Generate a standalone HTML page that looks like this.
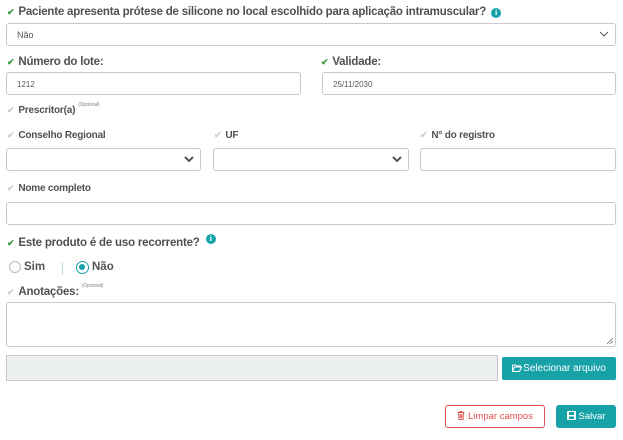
<!DOCTYPE html>
<html><head><meta charset="utf-8"><style>
*{box-sizing:border-box;margin:0;padding:0}
body{width:623px;height:440px;background:#fff;font-family:"Liberation Sans",sans-serif;position:relative;overflow:hidden;color:#555}
.a{position:absolute}
.lbl{position:absolute;font-weight:bold;font-size:11px;color:#505050;white-space:nowrap;letter-spacing:-0.2px}
.lbl.big{font-size:11.5px}
.ck{display:inline-block;font-size:9px;margin-right:4px;color:#3a9a3a;font-weight:bold}
.ck.g{color:#ccc}
.opt{font-size:5px;color:#888;font-weight:normal;vertical-align:top;position:relative;top:-3px;margin-left:3px}
.box{position:absolute;border:1px solid #c8c8c8;border-radius:3px;background:#fff;font-size:9px;color:#555}
.box span{position:absolute;left:10px;top:6px}
.chev{position:absolute;right:6px;top:6px;width:10px;height:8px}
.info{display:inline-block;width:10px;height:10px;border-radius:50%;background:#17a2a8;color:#fff;font-size:8px;text-align:center;line-height:10px;font-weight:bold;font-family:"Liberation Serif",serif;vertical-align:top}
</style></head><body>
<div class="lbl big" style="left:7px;top:6px"><span class="ck">✔</span>Paciente apresenta prótese de silicone no local escolhido para aplicação intramuscular? <span class="info" style="margin-left:2px;margin-top:2px">i</span></div>
<div class="box" style="left:6px;top:23px;width:610px;height:23px"><span style="top:6px">Não</span><svg class="chev" viewBox="0 0 10 8"><path d="M1 2 L5 6 L9 2" stroke="#555" fill="none" stroke-width="1"/></svg></div>

<div class="lbl big" style="left:7px;top:56px"><span class="ck">✔</span>Número do lote:</div>
<div class="lbl big" style="left:321px;top:56px"><span class="ck">✔</span>Validade:</div>
<div class="box" style="left:6px;top:72px;width:295px;height:23px"><span style="font-size:8px;top:7px">1212</span></div>
<div class="box" style="left:322px;top:72px;width:294px;height:23px"><span style="font-size:8px;top:7px">25/11/2030</span></div>

<div class="lbl" style="left:7px;top:105px;font-size:10px"><span class="ck g">✔</span>Prescritor(a)<span class="opt">(Opcional)</span></div>
<div class="lbl" style="left:7px;top:130px;font-size:10px"><span class="ck g">✔</span>Conselho Regional</div>
<div class="lbl" style="left:214px;top:130px;font-size:10px"><span class="ck g">✔</span>UF</div>
<div class="lbl" style="left:420px;top:130px;font-size:10px"><span class="ck g">✔</span>N° do registro</div>
<div class="box" style="left:6px;top:148px;width:195px;height:23px"><svg class="chev" viewBox="0 0 10 8"><path d="M1 2 L5 6 L9 2" stroke="#555" fill="none" stroke-width="2"/></svg></div>
<div class="box" style="left:213px;top:148px;width:196px;height:23px"><svg class="chev" viewBox="0 0 10 8"><path d="M1 2 L5 6 L9 2" stroke="#555" fill="none" stroke-width="2"/></svg></div>
<div class="box" style="left:420px;top:148px;width:196px;height:23px"></div>

<div class="lbl" style="left:7px;top:183px;font-size:10px"><span class="ck g">✔</span>Nome completo</div>
<div class="box" style="left:6px;top:202px;width:610px;height:23px"></div>

<div class="lbl big" style="left:7px;top:237px"><span class="ck">✔</span>Este produto é de uso recorrente? <span class="info" style="margin-left:3px;margin-top:-3px">i</span></div>
<div class="a" style="left:9px;top:261px;width:12px;height:12px;border:1px solid #bbb;border-radius:50%"></div>
<div class="a" style="left:24px;top:261px;font-weight:bold;font-size:11.5px;color:#555">Sim</div>
<div class="a" style="left:62px;top:262px;width:1px;height:13px;background:#aee0e0"></div>
<div class="a" style="left:76px;top:261px;width:13px;height:13px;border:1.5px solid #17a2a8;border-radius:50%"><div style="margin:2px;width:6px;height:6px;border-radius:50%;background:#17a2a8"></div></div>
<div class="a" style="left:92px;top:261px;font-weight:bold;font-size:11.5px;color:#555">Não</div>

<div class="lbl big" style="left:7px;top:286px"><span class="ck g">✔</span>Anotações:<span class="opt">(Opcional)</span></div>
<div class="box" style="left:6px;top:302px;width:610px;height:45px"><svg class="a" style="right:2px;bottom:2px" width="6" height="6"><path d="M0 6 L6 0 M3 6 L6 3" stroke="#777" stroke-width="0.8"/></svg></div>

<div class="a" style="left:6px;top:355px;width:492px;height:26px;background:#eceff0;border:1px solid #c8c8c8"></div>
<div class="a" style="left:502px;top:357px;width:114px;height:23px;background:#17a2a8;border-radius:2px;color:#fff;font-size:10px;line-height:23px;text-align:center"><svg width="10" height="8" style="vertical-align:-1px;margin-right:1px"><path d="M0.5 1 H4 L5 2 H8.5 V3 M0.5 1 V7.5 H7.5 L9.5 3 H2.5 L0.5 7.5" stroke="#fff" fill="none" stroke-width="1"/></svg>Selecionar arquivo</div>

<div class="a" style="left:445px;top:405px;width:100px;height:23px;border:1px solid #e05050;border-radius:3px;color:#e05050;font-size:9.5px;line-height:21px;text-align:center"><svg width="8" height="9" style="vertical-align:-1px;margin-right:3px"><path d="M0.5 1.5 H7.5 M3 1.5 V0.5 H5 V1.5 M1.5 1.5 L2 8.5 H6 L6.5 1.5 M3.3 3 V7 M4.7 3 V7" stroke="#e05050" fill="none" stroke-width="1"/></svg>Limpar campos</div>
<div class="a" style="left:556px;top:405px;width:60px;height:23px;background:#17a2a8;border-radius:3px;color:#fff;font-size:9.5px;line-height:23px;text-align:center"><svg width="9" height="9" style="vertical-align:-1px;margin-right:3px"><rect x="0" y="0" width="9" height="9" rx="1" fill="#fff"/><rect x="2" y="1" width="5" height="3" fill="#17a2a8"/><rect x="2" y="5.5" width="5" height="2.5" fill="#17a2a8"/></svg>Salvar</div>
</body></html>
